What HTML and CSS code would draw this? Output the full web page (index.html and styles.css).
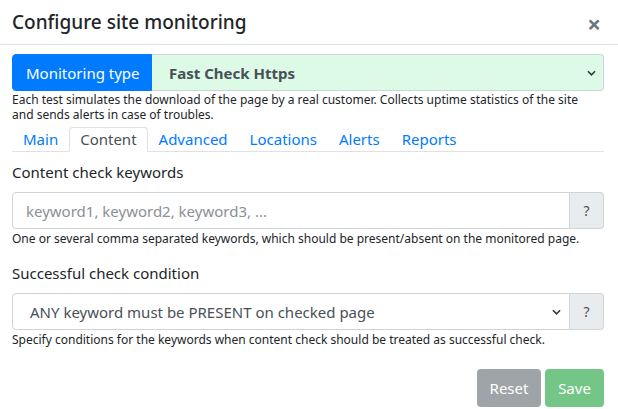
FILE: index.html
```html
<!DOCTYPE html>
<html>
<head>
<meta charset="utf-8">
<link rel="stylesheet" href="styles.css">
</head>
<body>
<div class="modal">
  <div class="modal-header">
    <h5 class="modal-title">Configure site monitoring</h5>
    <span class="close">&times;</span>
  </div>
  <div class="modal-body">
    <div class="input-group type-group">
      <span class="prepend">Monitoring type</span>
      <div class="select green bold"><span>Fast Check Https</span><svg class="chev" viewBox="0 0 10 6"><path d="M1 1l4 4 4-4" fill="none" stroke="#343a40" stroke-width="1.8"/></svg></div>
    </div>
    <p class="help intro">Each test simulates the download of the page by a real customer. Collects uptime statistics of the site and sends alerts in case of troubles.</p>
    <ul class="tabs">
      <li class="tab">Main</li>
      <li class="tab active">Content</li>
      <li class="tab">Advanced</li>
      <li class="tab">Locations</li>
      <li class="tab">Alerts</li>
      <li class="tab">Reports</li>
    </ul>
    <div class="field first">
      <label class="label">Content check keywords</label>
      <div class="input-group">
        <div class="control placeholder">keyword1, keyword2, keyword3, ...</div>
        <span class="append">?</span>
      </div>
      <p class="help one">One or several comma separated keywords, which should be present/absent on the monitored page.</p>
    </div>
    <div class="field second">
      <label class="label">Successful check condition</label>
      <div class="input-group">
        <div class="control select-ctl"><span>ANY keyword must be PRESENT on checked page</span><svg class="chev" viewBox="0 0 10 6"><path d="M1 1l4 4 4-4" fill="none" stroke="#343a40" stroke-width="1.8"/></svg></div>
        <span class="append">?</span>
      </div>
      <p class="help one">Specify conditions for the keywords when content check should be treated as successful check.</p>
    </div>
    <div class="footer">
      <button class="btn reset">Reset</button>
      <button class="btn save">Save</button>
    </div>
  </div>
</div>
</body>
</html>
```
FILE: styles.css
```css
* { box-sizing: border-box; }
html, body { margin: 0; padding: 0; background: #fff; }
body { font-family: "Noto Sans", "Open Sans", sans-serif; color: #212529; font-size: 15px; }
.modal { width: 618px; height: 409px; overflow: hidden; }
.modal-header { display: flex; align-items: center; justify-content: space-between; height: 45px; padding: 0 17px 0 12px; border-bottom: 1px solid #dee2e6; }
.modal-title { margin: 0; font-size: 19px; font-weight: 500; line-height: 24px; }
.close { font-size: 24px; color: #6c757d; line-height: 1; font-weight: 700; margin-top: 3px; }
.modal-body { padding: 9px 14px 0 12px; }
.input-group { display: flex; height: 37px; }
.prepend { background: #007bff; color: #fff; font-size: 15px; display: flex; align-items: center; padding: 0 11px 0 13px; width: 140px; border-radius: 4px 0 0 4px; border: 1px solid #007bff; }
.select { flex: 1; display: flex; align-items: center; justify-content: space-between; padding: 0 7px 0 17px; border: 1px solid #ced4da; border-left: 0; border-radius: 0 4px 4px 0; }
.green { background: #dcfae6; color: #495057; font-size: 15px; }
.bold { font-weight: 700; }
.chev { width: 9px; height: 6px; }
.help { margin: 1px 0 0; font-size: 12px; line-height: 15px; color: #212529; }
.help.intro { max-width: 580px; }
.help.one { margin-top: 2px; }
.tabs { display: flex; list-style: none; margin: 5px 0 0; padding: 0; border-bottom: 1px solid #dee2e6; height: 25px; }
.tab { color: #007bff; font-size: 15px; line-height: 23px; padding: 0 10px; border: 1px solid transparent; border-radius: 4px 4px 0 0; margin-bottom: -1px; }
.tab.active { color: #495057; background: #fff; border-color: #dee2e6 #dee2e6 #fff; }
.field.first { margin-top: 9px; }
.field.second { margin-top: 16px; }
.label { display: block; font-size: 15px; line-height: 22px; margin-bottom: 9px; }
.control { flex: 1; display: flex; align-items: center; padding: 0 12px 0 13px; border: 1px solid #ced4da; border-radius: 4px 0 0 4px; font-size: 15px; color: #495057; }
.placeholder { color: #8a9096; }
.select-ctl { justify-content: space-between; padding: 0 8px 0 17px; }
.append { width: 34px; display: flex; align-items: center; justify-content: center; background: #e9ecef; border: 1px solid #ced4da; border-left: 0; border-radius: 0 4px 4px 0; color: #495057; font-size: 14px; }
.footer { display: flex; justify-content: flex-end; gap: 4px; margin-top: 22px; }
.btn { font-family: inherit; font-size: 15px; color: #fff; border: 0; border-radius: 4px; height: 38px; padding: 0; }
.reset { background: #9fa4a8; width: 64px; }
.save { background: #73c686; width: 59px; }
```
